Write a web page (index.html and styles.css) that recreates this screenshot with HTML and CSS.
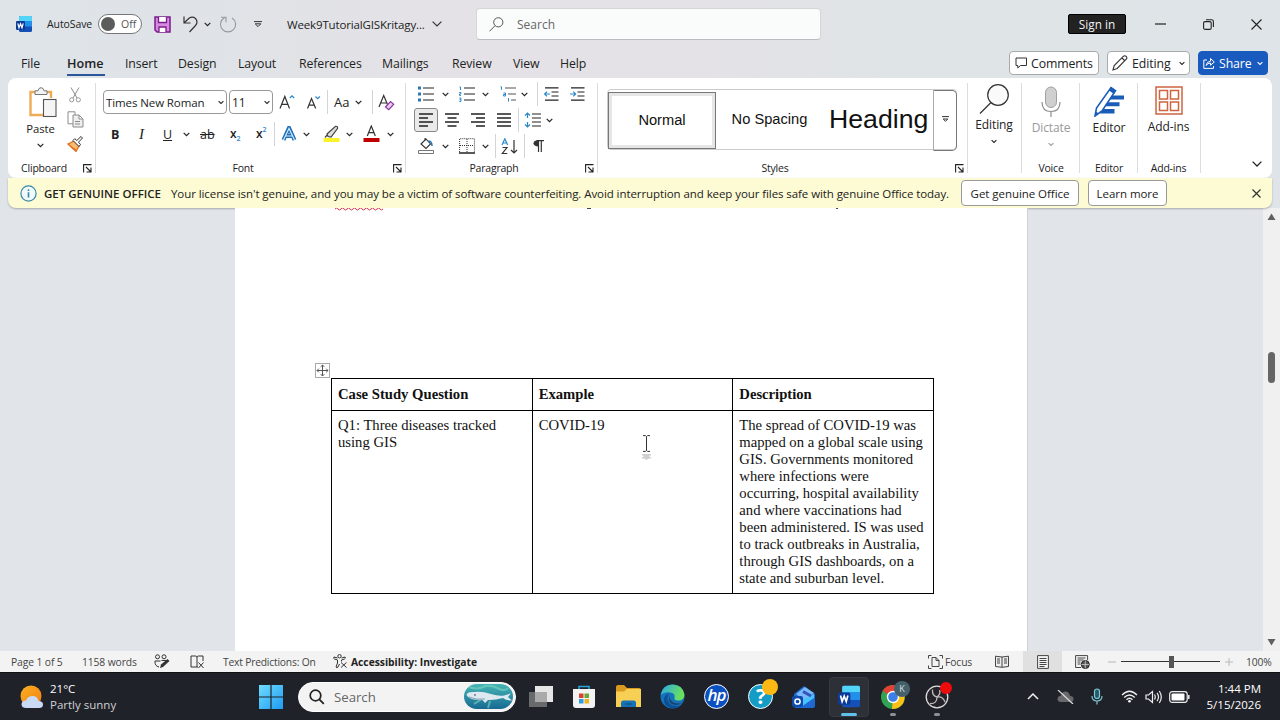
FILE: index.html
```
<!DOCTYPE html>
<html lang="en">

<head>
  <meta charset="UTF-8">
  <title>Week9TutorialGISKritagy - Word</title>
  <link rel="stylesheet" href="styles.css">
</head>

<body>
  <svg width="0" height="0" class="defs">
    <defs>
      <linearGradient id="blueGrad" x1="0" y1="0" x2="1" y2="1">
        <stop offset="0" stop-color="#6fdcff" />
        <stop offset="1" stop-color="#1f9bf0" />
      </linearGradient>
      <linearGradient id="sunGrad" x1="0" y1="0" x2="1" y2="1">
        <stop offset="0" stop-color="#fdb022" />
        <stop offset="1" stop-color="#f07f12" />
      </linearGradient>
      <linearGradient id="edgeGrad" x1="0" y1="0" x2="1" y2="0.3">
        <stop offset="0" stop-color="#2aa8e8" />
        <stop offset="1" stop-color="#6be05a" />
      </linearGradient>
      <linearGradient id="seaGrad" x1="0" y1="0" x2="0" y2="1">
        <stop offset="0" stop-color="#46b6b4" />
        <stop offset="1" stop-color="#176a92" />
      </linearGradient>
    </defs>
    <symbol id="chev" viewBox="0 0 7 5"><path d="M.7 .8 3.500 3.600 6.300 .8" fill="none" stroke="currentColor" stroke-width="1.200" /></symbol>
    <symbol id="launch" viewBox="0 0 9 9"><path d="M.6 8.500V.6H8.500M3 3l4.500 4.500M8 3.500V8H3.500" fill="none" stroke="#222" stroke-width="1.100" /></symbol>
    <symbol id="word" viewBox="0 0 16 16">
      <rect x="3" y="0" width="13" height="16" rx="1.500" fill="#1550b8" />
      <path d="M3 5V1.500Q3 0 4.500 0h10Q16 0 16 1.500V5z" fill="#52d5f8" />
      <path d="M3 5h13v5.500H3z" fill="#2290ea" />
      <rect x="0" y="5" width="9" height="9" rx="1.200" fill="#0b3a96" />
      <path d="M1.800 7.300 3 11.700 4.500 7.700 6 11.700 7.200 7.300" fill="none" stroke="#fff" stroke-width="1.200" />
    </symbol>
  </svg>

  <header class="titlebar">
    <svg width="16" height="16"><use href="#word" /></svg>
    <span class="autosave">AutoSave</span>
    <span class="toggle"><i></i>Off</span>
    <svg width="17" height="17" viewBox="0 0 17 17"><path d="M1 1h15v15H3l-2-2z" fill="#d68be0" stroke="#7a1c8c" stroke-width="1.500" /><path d="M4.500 1v5.500h8V1M5 16v-5h7v5" fill="#fff" stroke="#7a1c8c" stroke-width="1.300" /></svg>
    <svg width="16" height="17" viewBox="0 0 16 17"><path d="M1 .5V7h6.500M1.200 6.800 6 2.300Q9.500 0 12.500 2.500 15.500 6 12.500 9.500L6.500 16" fill="none" stroke="#333" stroke-width="1.200" /></svg>
    <svg width="7" height="5"><use href="#chev" /></svg>
    <svg width="17" height="17" viewBox="0 0 17 17"><path d="M4.500 1.800A7.500 7.500 0 1 0 12 2M1 1.200h5v5M" fill="none" stroke="#969a9e" stroke-width="1.100" /></svg>
    <svg width="8" height="7" viewBox="0 0 8 7"><path d="M0 .6h8M1.200 2.800 4 5.600 6.800 2.800z" fill="none" stroke="#333" /></svg>
    <span class="filename">Week9TutorialGISKritagy...</span>
    <svg width="10" height="6" viewBox="0 0 10 6"><path d="m.6.6 4.400 4.400L9.400.6" fill="none" stroke="#333" stroke-width="1.200" /></svg>
    <div class="search">
      <svg width="15" height="15" viewBox="0 0 15 15"><circle cx="9.300" cy="5.300" r="4.600" fill="none" stroke="#555" /><path d="M6 8.700.5 14.300" stroke="#555" /></svg>
      <span>Search</span>
    </div>
    <span class="signin">Sign in</span>
    <svg width="11" height="2"><path d="M0 1h11" stroke="#222" stroke-width="1.200" /></svg>
    <svg width="11" height="11" viewBox="0 0 11 11"><rect x=".6" y="2.600" width="7.600" height="7.800" rx="1.500" fill="none" stroke="#222" stroke-width="1.100" /><path d="M3 .7h5.500q1.900 0 1.900 1.900V8" fill="none" stroke="#222" stroke-width="1.100" /></svg>
    <svg width="11" height="11" viewBox="0 0 11 11"><path d="m.5.5 10 10M10.500.5l-10 10" stroke="#222" stroke-width="1.100" /></svg>
  </header>

  <nav class="tabs">
    <span>File</span>
    <span class="active">Home</span>
    <span>Insert</span>
    <span>Design</span>
    <span>Layout</span>
    <span>References</span>
    <span>Mailings</span>
    <span>Review</span>
    <span>View</span>
    <span>Help</span>
    <div class="pill">
      <svg width="12" height="12" viewBox="0 0 12 12"><path d="M1 1h10.500v7.500h-6L2.800 11V8.500H1z" fill="none" stroke="#333" /></svg>
      <b>Comments</b>
    </div>
    <div class="pill">
      <svg width="16" height="16" viewBox="0 0 16 16"><path d="m1 15 1.200-4.500L11.500 1.200q1.500-1 2.700.2t.3 2.600L5.200 13.500zM10 3l3 3" fill="none" stroke="#333" stroke-width="1.100" /></svg>
      <b>Editing</b>
      <svg width="6" height="5"><use href="#chev" /></svg>
    </div>
    <div class="pill share">
      <svg width="12" height="12" viewBox="0 0 12 12"><path d="M4 3H.8v8.400h9.700V9M3.200 8.500Q3.500 4.500 7.500 4.200V1.500L11.300 5 7.500 8.200V6Q4.500 6 3.200 8.500z" fill="none" stroke="#fff" /></svg>
      <b>Share</b>
      <svg width="6" height="5"><use href="#chev" /></svg>
    </div>
  </nav>

  <section class="ribbon">
    <div class="group clipboard">
      <div class="body">
        <div class="big">
          <svg width="28" height="31" viewBox="0 0 28 31"><path d="M6 5H1.500v23H14" fill="none" stroke="#eeaa55" stroke-width="2.400" /><path d="M18 5h4v6" fill="none" stroke="#eeaa55" stroke-width="2.400" /><path d="M6 7.500V3.800h3Q9.500.7 12 .7t3 3.100h3v3.700z" fill="#f2f2f2" stroke="#777" /><rect x="14.500" y="12.500" width="12.500" height="17" fill="#f5f5f5" stroke="#555" stroke-width="1.100" /></svg>
          <span>Paste</span>
          <svg width="7" height="5"><use href="#chev" /></svg>
        </div>
        <div class="minis">
          <svg width="12" height="16" viewBox="0 0 12 16"><path d="M2 .5 8 11M10 .5 4 11" stroke="#8c8c8c" /><circle cx="2.700" cy="12.800" r="2.100" fill="none" stroke="#999" /><circle cx="9.300" cy="12.800" r="2.100" fill="none" stroke="#999" /></svg>
          <svg width="17" height="17" viewBox="0 0 17 17"><path d="M1 .8h7v12H1z" fill="#fff" stroke="#8c8c8c" /><path d="M6 4h6l4 4v8H6zM12 4v4h4M8 10.500h5M8 13h5" fill="#eee" stroke="#8c8c8c" /></svg>
          <svg width="16" height="16" viewBox="0 0 16 16"><path d="m1 8 6-3 5 5-3 5.500z" fill="#f7ba70" stroke="#dc6d19" stroke-width="1.200" /><path d="m6 4.500 6 6 1.500-2-2-2.300L15.500 2 14 .5 9.800 4.500 7.800 2.700z" fill="#fff" stroke="#333" /><path d="m3 10 6 4" stroke="#dc6d19" /></svg>
        </div>
      </div>
      <div class="label"><span>Clipboard</span><svg width="9" height="9"><use href="#launch" /></svg></div>
    </div>

    <div class="group font">
      <div class="body">
        <div class="row font-row1">
          <div class="combo name"><span>Times New Roman</span><svg width="6" height="5"><use href="#chev" /></svg></div>
          <div class="combo size"><span>11</span><svg width="6" height="5"><use href="#chev" /></svg></div>
          <svg width="16" height="17" viewBox="0 0 16 17"><path d="M1 14.500 5.800 2.500l4.700 12M2.700 10.300h6.200" fill="none" stroke="#333" stroke-width="1.200" /><path d="m10.800 4 2.200-2.200L15.200 4" fill="none" stroke="#2b88c8" stroke-width="1.200" /></svg>
          <svg width="15" height="17" viewBox="0 0 15 17"><path d="M1.500 14.500 5.500 4.500l4.200 10M2.900 11.200h5.300" fill="none" stroke="#333" stroke-width="1.200" /><path d="m9.500 2.500 2.200 2.200 2.200-2.200" fill="none" stroke="#2b88c8" stroke-width="1.200" /></svg>
          <i class="sep"></i>
          <span class="aa">Aa</span>
          <svg width="7" height="5"><use href="#chev" /></svg>
          <i class="sep"></i>
          <svg width="17" height="17" viewBox="0 0 17 17"><path d="M1 13 5.700 1.500l4 9.500M2.800 9h6" fill="none" stroke="#333" stroke-width="1.200" /><path d="m7.500 13 5-5.500 3.200 2.700-5 5.500z" fill="#eccdf2" stroke="#8e35a1" stroke-width="1.200" /></svg>
        </div>
        <div class="row font-row2">
          <b class="g-b">B</b>
          <em class="g-i">I</em>
          <u class="g-u">U</u>
          <svg width="7" height="5"><use href="#chev" /></svg>
          <s class="g-s">ab</s>
          <span class="g-x">x<sub>2</sub></span>
          <span class="g-x">x<sup>2</sup></span>
          <i class="sep"></i>
          <svg width="16" height="16" viewBox="0 0 16 16"><path d="M2.500 14 8 1.800 13.500 14M4.500 10h7" fill="none" stroke="#1e6fb8" stroke-width="4" /><path d="M2.500 14 8 2.500 13.500 14M4.500 10h7" fill="none" stroke="#cfe8fa" stroke-width="1.200" /></svg>
          <svg width="7" height="5"><use href="#chev" /></svg>
          <svg width="17" height="18" viewBox="0 0 17 18"><path d="m4 9 1 2.500 3 .5 6.500-8.500Q15 1 12.500 1.300zM4.500 9.500 2 12.500" fill="#ddd" stroke="#444" stroke-width="1.200" /><path d="M.5 13h16v4H.5z" fill="#fbf32a" /></svg>
          <svg width="7" height="5"><use href="#chev" /></svg>
          <svg width="17" height="18" viewBox="0 0 17 18"><path d="M4.300 11 8.300 1l4 10M5.700 7.600h5.300" fill="none" stroke="#333" stroke-width="1.200" /><path d="M.5 13h16v4H.5z" fill="#c00000" /></svg>
          <svg width="7" height="5"><use href="#chev" /></svg>
        </div>
      </div>
      <div class="label"><span>Font</span><svg width="9" height="9"><use href="#launch" /></svg></div>
    </div>

    <div class="group paragraph">
      <div class="body">
        <div class="row para-row1">
          <svg width="16" height="16" viewBox="0 0 16 16"><path d="M0 .5h3v3H0zM0 6.500h3v3H0zM0 12.500h3v3H0z" fill="#2878b8" /><path d="M5 2h11M5 8h11M5 14h11" stroke="#222" stroke-width="1.200" /></svg>
          <svg width="7" height="5"><use href="#chev" /></svg>
          <svg width="16" height="16" viewBox="0 0 16 16"><path d="M.5 1h1v3M.3 6.500h1.600v1.400H.5v1.500H2M.3 12h1.600v3.500H.3M.5 13.700h1.400" fill="none" stroke="#2b88c8" /><path d="M5 2h11M5 8h11M5 14h11" stroke="#222" stroke-width="1.200" /></svg>
          <svg width="7" height="5"><use href="#chev" /></svg>
          <svg width="16" height="16" viewBox="0 0 16 16"><path d="M.5.800h1v3M3.500 7h2v3h-2V8.500h2M8.500 12v3.500" fill="none" stroke="#2b88c8" /><path d="M5 2h11M8 8h8M11 14h5" stroke="#555" stroke-width="1.200" /></svg>
          <svg width="7" height="5"><use href="#chev" /></svg>
          <i class="sep"></i>
          <svg width="15" height="14" viewBox="0 0 15 14"><path d="M1 .8h13.500M7.500 5h7M7.500 9h7M1 13.200h13.500" stroke="#222" stroke-width="1.200" /><path d="M6 7H.8M3 4.700.7 7 3 9.300" fill="none" stroke="#2b88c8" stroke-width="1.200" /></svg>
          <svg width="15" height="14" viewBox="0 0 15 14"><path d="M1 .8h13.500M7.500 5h7M7.500 9h7M1 13.200h13.500" stroke="#222" stroke-width="1.200" /><path d="M0 7h5.500M3.300 4.700 5.600 7 3.300 9.300" fill="none" stroke="#2b88c8" stroke-width="1.200" /></svg>
        </div>
        <div class="row para-row2">
          <span class="pressed"><svg width="14" height="14" viewBox="0 0 14 14"><path d="M0 1h14M0 5h9M0 9h14M0 13h9" stroke="#222" stroke-width="1.300" /></svg></span>
          <svg width="14" height="14" viewBox="0 0 14 14"><path d="M0 1h14M2.500 5h9M0 9h14M2.500 13h9" stroke="#222" stroke-width="1.300" /></svg>
          <svg width="14" height="14" viewBox="0 0 14 14"><path d="M0 1h14M5 5h9M0 9h14M5 13h9" stroke="#222" stroke-width="1.300" /></svg>
          <svg width="14" height="14" viewBox="0 0 14 14"><path d="M0 1h14M0 5h14M0 9h14M0 13h14" stroke="#222" stroke-width="1.300" /></svg>
          <i class="sep"></i>
          <svg width="17" height="16" viewBox="0 0 17 16"><path d="M3.500 1v5M1 3.500 3.500 1 6 3.500M3.500 15v-5M1 12.500 3.500 15 6 12.500" fill="none" stroke="#2b88c8" stroke-width="1.200" /><path d="M8 2h9M8 6h9M8 10h9M8 14h9" stroke="#222" stroke-width="1.200" /></svg>
          <svg width="7" height="5"><use href="#chev" /></svg>
        </div>
        <div class="row para-row3">
          <svg width="17" height="16" viewBox="0 0 17 16"><path d="m3 6 5-5 4.500 5L8 10.500zM7 3V0" fill="none" stroke="#333" stroke-width="1.100" /><path d="M10 3.500q4-1 4 4.500" fill="none" stroke="#1e6fb8" stroke-width="1.500" /><path d="M.5 12.500h15v3H.5z" fill="#fff" stroke="#777" /></svg>
          <svg width="7" height="5"><use href="#chev" /></svg>
          <svg width="16" height="16" viewBox="0 0 16 16"><path d="M.6 14V.7h14.800V14M8 1v13M1 7.500h14" fill="none" stroke="#333" stroke-dasharray="1 1" /><path d="M0 15h16" stroke="#111" stroke-width="1.400" /></svg>
          <svg width="7" height="5"><use href="#chev" /></svg>
          <i class="sep"></i>
          <svg width="17" height="17" viewBox="0 0 17 17"><path d="M1 7 3.800.8 6.700 7M2 5h3.600" fill="none" stroke="#2b88c8" stroke-width="1.200" /><path d="M1.500 9.500H6L1.300 15.500h5M13 2v13M10 12l3 3 3-3" fill="none" stroke="#333" stroke-width="1.200" /></svg>
          <i class="sep"></i>
          <svg width="11" height="12" viewBox="0 0 11 12"><path d="M5.500.7V12M8.300.7V12M3.500.7H11" stroke="#333" stroke-width="1.200" /><path d="M5.500.2Q.5.200.5 3.300T5.500 6.500z" fill="#333" /></svg>
        </div>
      </div>
      <div class="label"><span>Paragraph</span><svg width="9" height="9"><use href="#launch" /></svg></div>
    </div>

    <div class="group styles">
      <div class="body">
        <div class="gallery">
          <div class="style selected">Normal</div>
          <div class="style">No Spacing</div>
          <div class="style heading">Heading</div>
          <div class="more"><svg width="7" height="7" viewBox="0 0 7 7"><path d="M0 .6h7M1.200 3 3.500 5.300 5.800 3z" fill="none" stroke="#333" /></svg></div>
        </div>
      </div>
      <div class="label"><span>Styles</span><svg width="9" height="9"><use href="#launch" /></svg></div>
    </div>

    <div class="group editing">
      <div class="big">
        <svg width="30" height="30" viewBox="0 0 30 30"><circle cx="19" cy="11" r="10.300" fill="#fafafa" stroke="#333" stroke-width="1.200" /><path d="M12 18.500 1 29.500" stroke="#333" stroke-width="1.200" /></svg>
        <span>Editing</span>
        <svg width="6" height="5"><use href="#chev" /></svg>
      </div>
    </div>

    <div class="group voice">
      <div class="big">
        <svg width="20" height="31" viewBox="0 0 20 31"><rect x="4.500" y="1" width="11" height="20.500" rx="5.500" fill="#cfcfcf" stroke="#a0a0a0" /><path d="M1 16q0 9.500 9 9.500t9-9.500M10 25.500V31" fill="none" stroke="#8e8e8e" stroke-width="1.200" /></svg>
        <span>Dictate</span>
        <svg width="6" height="5"><use href="#chev" /></svg>
      </div>
      <div class="label"><span>Voice</span></div>
    </div>

    <div class="group editor">
      <div class="big">
        <svg width="31" height="31" viewBox="0 0 31 31"><path d="M14 9.500h16v4H12zM11 16.300h14.500v4H9zM9 23h11.500v4.500H6z" fill="#1b5cb8" /><path d="m1 30 1.500-8L17 1.500l4.500 3.200L8 25z" fill="#fff" stroke="#1b5cb8" stroke-width="1.600" /><path d="m17 1 5 3.500L20 8l-5-3.500zM1 30l.8-4.500 3 2z" fill="#1b5cb8" /></svg>
        <span>Editor</span>
      </div>
      <div class="label"><span>Editor</span></div>
    </div>

    <div class="group addins">
      <div class="big">
        <svg width="28" height="29" viewBox="0 0 28 29"><path d="M1 1h26v27H1zM4.500 4.500h8v8.500h-8zM15.500 4.500h8v8.500h-8zM4.500 16h8v8.500h-8zM15.500 16h8v8.500h-8z" fill="#fff" stroke="#ce6540" stroke-width="1.500" /></svg>
        <span>Add-ins</span>
      </div>
      <div class="label"><span>Add-ins</span></div>
    </div>

    <div class="collapse"><svg width="10" height="6" viewBox="0 0 10 6"><path d="m.6.6 4.400 4.400L9.400.6" fill="none" stroke="#222" stroke-width="1.300" /></svg></div>
  </section>

  <section class="notice">
    <svg width="17" height="17" viewBox="0 0 17 17"><circle cx="8.500" cy="8.500" r="7.600" fill="#f0fafa" stroke="#3a87a8" stroke-width="1.200" /><path d="M8.500 7.200v5.300M8.500 4.300v1.800" stroke="#3a87a8" stroke-width="1.600" /></svg>
    <b class="n-title">GET GENUINE OFFICE</b>
    <span class="n-text">Your license isn't genuine, and you may be a victim of software counterfeiting. Avoid interruption and keep your files safe with genuine Office today.</span>
    <span class="n-btn">Get genuine Office</span>
    <span class="n-btn n-learn">Learn more</span>
    <svg width="9" height="9" viewBox="0 0 9 9"><path d="m.5.5 8 8M8.500.5l-8 8" stroke="#333" stroke-width="1.200" /></svg>
  </section>

  <main class="workspace">
    <article class="page">
      <svg class="remnant" width="520" height="3" viewBox="0 0 520 3"><path d="M0 1q1.500-2 3 0t3 0 3 0 3 0 3 0 3 0 3 0 3 0 3 0 3 0 3 0 3 0 3 0 3 0 3 0 3 0" fill="none" stroke="#d03048" /><path d="M252 .5h4M501 .5h2" stroke="#444" /></svg>
      <div class="handle"><svg width="13" height="13" viewBox="0 0 13 13"><path d="M6.500 1v11M1 6.500h11M4.700 2.800 6.500 1l1.800 1.800M4.700 10.200 6.500 12l1.800-1.800M2.800 4.700 1 6.500l1.800 1.800M10.200 4.700 12 6.500l-1.800 1.800" fill="none" stroke="#555" /></svg></div>
      <table>
        <tr>
          <th>Case Study Question</th>
          <th>Example</th>
          <th>Description</th>
        </tr>
        <tr>
          <td>Q1: Three diseases tracked<br>using GIS</td>
          <td>COVID-19</td>
          <td>The spread of COVID-19 was<br>mapped on a global scale using<br>GIS. Governments monitored<br>where infections were<br>occurring, hospital availability<br>and where vaccinations had<br>been administered. IS was used<br>to track outbreaks in Australia,<br>through GIS dashboards, on a<br>state and suburban level.</td>
        </tr>
      </table>
      <svg class="cursor" width="9" height="26" viewBox="0 0 9 26"><path d="M1 .6h2.500l1 1 1-1H8M4.500 1.500v14M1 16.400h2.500l1-1 1 1H8" fill="none" stroke="#333" /><path d="M0 19h9v1.500H7.500V22H9v1.500H7L4.500 25 2 23.500H0V22h1.500v-1.500H0z" fill="#d0d0d0" /></svg>
    </article>
    <aside class="scrollbar">
      <svg width="9" height="8" viewBox="0 0 9 8"><path d="M4.500.5 8.500 7h-8z" fill="#606060" /></svg>
      <i class="thumb"></i>
      <svg width="9" height="8" viewBox="0 0 9 8"><path d="M4.500 7.500 8.500 1h-8z" fill="#606060" /></svg>
    </aside>
  </main>

  <footer class="status">
    <span>Page 1 of 5</span>
    <span>1158 words</span>
    <svg width="16" height="15" viewBox="0 0 16 15"><circle cx="3.500" cy="2.800" r="2" fill="none" stroke="#333" /><circle cx="10" cy="2.800" r="2" fill="none" stroke="#333" /><path d="M6.500 7H1q-.5 5 4 6M7.500 6.500h6" fill="none" stroke="#333" /><path d="m6 14 1-3.500L13.500 5l2 2L9 13z" fill="#333" /></svg>
    <svg width="15" height="14" viewBox="0 0 15 14"><path d="M8 12H1V1h4.500Q7 1 7 2.500V12M7 2.500Q7 1 8.500 1H13v5M8.500 7.500l5 5.500M13.500 7.500l-5 5.500" fill="none" stroke="#333" /></svg>
    <span class="s-pred">Text Predictions: On</span>
    <svg width="15" height="15" viewBox="0 0 15 15"><circle cx="6.500" cy="2.200" r="1.700" fill="none" stroke="#333" /><path d="M4.500 4 1 3q-1 1.300.5 2L4.500 6v3L3 13q1 1.500 2 0l1.500-3M8.500 4 12 3q1 1.300-.5 2L8.500 6v1.500M8 8.500l5.500 5M13.500 8.500l-5.500 5" fill="none" stroke="#333" /></svg>
    <b class="s-acc">Accessibility: Investigate</b>
    <svg width="15" height="14" viewBox="0 0 15 14"><path d="M.5 3.500v-3h3M11.500.5h3v3M.5 10.500v3h3M11.500 13.500h3v-3M4 2.500h4l3 3v6H4zM8 2.500v3h3" fill="none" stroke="#444" /></svg>
    <span>Focus</span>
    <svg width="14" height="13" viewBox="0 0 14 13"><path d="M.5 1.200 7 2l6.500-.8v10.300L7 12.300.5 11.500zM7 2v10M2 4h3M2 6h3M2 8h3M9 4h3M9 6h3M9 8h3" fill="#eee" stroke="#444" /></svg>
    <i class="view-on"><svg width="12" height="14" viewBox="0 0 12 14"><path d="M.6.6h10.800v12.800H.6zM2.500 3.500h7M2.500 5.500h7M2.500 7.500h7M2.500 9.500h7M2.500 11.500h5" fill="#f4f4f4" stroke="#444" /></svg></i>
    <svg width="15" height="14" viewBox="0 0 15 14"><path d="M6 12.500H.6V.6h12V5M2.500 3h8M2.500 5h6M2.500 7h3M2.500 9h3" fill="none" stroke="#444" /><circle cx="10.300" cy="9.500" r="4" fill="#555" stroke="#222" /><path d="M6.500 9.500h7.500M10.300 5.500v8" stroke="#ddd" stroke-width=".7" /></svg>
    <svg width="8" height="2"><path d="M0 1h8" stroke="#b8b8b8" /></svg>
    <i class="slider"></i>
    <svg width="8" height="8"><path d="M0 4h8M4 0v8" stroke="#b8b8b8" /></svg>
    <span>100%</span>
  </footer>

  <footer class="taskbar">
    <svg width="24" height="24" viewBox="0 0 24 24"><circle cx="11" cy="11" r="10.500" fill="url(#sunGrad)" /><path d="M6 23Q1.500 23 1.500 19.300T6 15.500Q7.500 11 12.500 11T18.500 16q4.500 0 4.500 3.500T19 23z" fill="#c9daf6" /></svg>
    <div class="weather"><span>21°C</span><span class="w-text">Partly sunny</span></div>
    <svg width="24" height="24" viewBox="0 0 24 24"><path d="M0 0h11.400v11.400H0zM12.600 0H24v11.400H12.600zM0 12.600h11.400V24H0zM12.600 12.600H24V24H12.600z" fill="url(#blueGrad)" /></svg>
    <div class="task-search">
      <svg width="16" height="16" viewBox="0 0 16 16"><circle cx="6.500" cy="6.500" r="5.300" fill="none" stroke="#222" stroke-width="1.700" /><path d="m10.300 10.300 4.500 4.500" stroke="#222" stroke-width="1.800" /></svg>
      <span>Search</span>
      <svg width="49" height="25" viewBox="0 0 49 25"><rect width="49" height="25" rx="12.500" fill="url(#seaGrad)" /><path d="M5 3q8 3 14 0t14 1 11 0M10 20l8-5M24 24l2-7" stroke="#7fd6c4" stroke-width="2" fill="none" opacity=".6" /><path d="M2.500 11Q3 7.500 10 8q8-1 17 2 8 2.500 13 1.500L47 9.500 44 13l4 3.500q-6 0-9-2.500-9 2.500-15 2l-3 3-3-3.500Q6 17 2.500 11z" fill="#dde8f0" /><path d="M5 13q7 3 16 2" stroke="#8aa4bc" fill="none" /><circle cx="11" cy="11" r=".8" fill="#234" /></svg>
    </div>
    <svg width="25" height="23" viewBox="0 0 25 23"><path d="M6 1h18v16H6z" fill="#e6e6e6" /><path d="M0 7h18v15H0z" fill="#777" opacity=".85" /><path d="M6 7h12v10H6z" fill="#aaa" /></svg>
    <svg width="24" height="24" viewBox="0 0 24 24"><path d="M7 4V1.500h10V4" fill="none" stroke="#29a8d8" stroke-width="1.500" /><path d="M1 4h22v16q0 3-3 3H4q-3 0-3-3z" fill="#f3f3f3" /><path d="M7 8.500h4.500V13H7z" fill="#d8432f" /><path d="M12.500 8.500H17V13h-4.500z" fill="#6aa832" /><path d="M7 14h4.500v4.500H7z" fill="#2b9fe0" /><path d="M12.500 14H17v4.500h-4.500z" fill="#f0b322" /></svg>
    <svg width="25" height="23" viewBox="0 0 25 23"><path d="M0 2q0-2 2-2h6l3 3h12q2 0 2 2v5H0z" fill="#d99a1e" /><path d="M0 6.500h8L10.500 4H25v18H0z" fill="#f8cf55" /><path d="M5 22v-4q0-2.500 2.500-2.500h10q2.500 0 2.500 2.500v4z" fill="#1672b5" /><path d="M9 19h7" stroke="#0c4a80" /></svg>
    <svg width="25" height="25" viewBox="0 0 25 25"><circle cx="12.500" cy="12.500" r="12" fill="#1572bd" /><path d="M.7 11Q2.500.5 12.500.5t12 10q0 6-6.500 6-4 0-3.500-2.500 1-5-4.500-5.500Q4 7.500.7 11z" fill="url(#edgeGrad)" /><path d="M9 9q-3.500 6 .5 10.500 4 4 10.500 1.800-3 3-7.500 3.200Q3.500 23 4 15q.5-4 5-6z" fill="#0d4f94" /><path d="M11 9.500q-2.500 3-.5 6.500 3 4 9 3.500 2-.5 3.500-1.500-3 3-7 3-6-.5-7-5-.3-4 2-6.500z" fill="#1f2229" opacity=".6" /></svg>
    <div class="hp">hp</div>
    <div class="help">?</div>
    <svg width="24" height="24" viewBox="0 0 24 24"><path d="M2 9 12 1l11 8v12q0 2-2 2H5q-3 0-3-2z" fill="#1d68d2" /><path d="M4 9 13 2l9 6-9 8z" fill="#79b8fa" /><path d="m4 18 18-9v4L9 22z" fill="#48c3fb" /><path d="M11 6.500 19 11" stroke="#3056b8" stroke-width="3" /><rect y="11" width="11" height="11" rx="2" fill="#0f4bab" /><circle cx="5.500" cy="16.500" r="2.600" fill="none" stroke="#fff" stroke-width="1.500" /></svg>
    <div class="running"><svg width="22" height="23" viewBox="0 0 16 16"><use href="#word" /></svg></div>
    <div class="app chrome"><svg width="24" height="24" viewBox="0 0 24 24"><circle cx="12" cy="12" r="12" fill="#32a350" /><path d="M12 12 1.600 6Q5 0 12 0t10.400 6z" fill="#e34133" /><path d="M12 12 22.400 6Q25 12 22 18.500 18 24 11 24z" fill="#fbc116" /><circle cx="12" cy="12" r="5.500" fill="#3d7fe8" stroke="#fff" stroke-width="1.400" /></svg></div>
    <div class="app obs"><svg width="24" height="24" viewBox="0 0 24 24"><circle cx="12" cy="12" r="10.800" fill="#252329" stroke="#ddd" stroke-width="1.300" /><path d="M7.500 4.500Q7 11 12 12q6-1 8 5M12 12q0 7-7 6.500M12 12q4-3 2.500-7" fill="none" stroke="#bbb" stroke-width="1.300" /></svg></div>
    <svg width="12" height="7" viewBox="0 0 12 7"><path d="m1 6 5-5 5 5" fill="none" stroke="#eee" stroke-width="1.500" /></svg>
    <svg width="17" height="14" viewBox="0 0 17 14"><path d="M4 12q-3.500 0-3.500-3T4 5.500Q5 1.500 8.500 1.500T13 6q3.500 0 3.500 3T13.500 12z" fill="#69696d" /><path d="m1 0 15 14" stroke="#ddd" stroke-width="1.200" /></svg>
    <svg width="12" height="17" viewBox="0 0 12 17"><rect x="3.500" y="1" width="5" height="9.500" rx="2.500" fill="#245b66" stroke="#7ec8d6" stroke-width="1.200" /><path d="M1 8q0 5 5 5t5-5M6 13v3.500" fill="none" stroke="#7ec8d6" stroke-width="1.200" /></svg>
    <svg width="17" height="13" viewBox="0 0 17 13"><path d="M1 5q7.500-7.500 15 0M3.200 7.500q5.300-5 10.600 0M5.500 9.800q3-3 6 0" fill="none" stroke="#eee" stroke-width="1.300" /><circle cx="8.500" cy="11.300" r="1.300" fill="#fff" /></svg>
    <svg width="17" height="14" viewBox="0 0 17 14"><path d="M1 5h2.500L7.500 1.500v11L3.500 9H1z" fill="none" stroke="#eee" stroke-width="1.200" /><path d="M9.500 4.500q1.500 2.500 0 5M12 2.800q3 4.200 0 8.400M14.300 1q4 6 0 12" fill="none" stroke="#eee" stroke-width="1.200" /></svg>
    <svg width="21" height="12" viewBox="0 0 21 12"><rect x=".7" y=".7" width="17.500" height="10.600" rx="2.500" fill="none" stroke="#eee" stroke-width="1.200" /><rect x="2.500" y="2.500" width="13" height="7" rx="1" fill="#fff" /><path d="M19.800 4v4" stroke="#eee" stroke-width="1.500" /></svg>
    <div class="clock"><span>1:44 PM</span><span>5/15/2026</span></div>
  </footer>
</body>

</html>
```
FILE: styles.css
```
* {
  box-sizing: border-box;
}

body {
  margin: 0;
  width: 1280px;
  height: 720px;
  overflow: hidden;
  display: flex;
  flex-direction: column;
  background: linear-gradient(90deg, #dfe4e8 0, #dfe3e7 200px, #e4e2e6 420px, #e4e2e6 700px, #dfe4e7 900px, #dfe4e8 1280px);
  font-family: "Open Sans", "Noto Sans", sans-serif;
  font-size: 12px;
  color: #222;
}

svg {
  display: block;
  flex: none;
}

b {
  font-weight: normal;
}

span,
b {
  white-space: nowrap;
}

.defs {
  position: absolute;
}

/* columns are the distances between left edges */
.titlebar {
  height: 48px;
  display: grid;
  grid-template-columns: 31px 51px 56px 29px 21px 16px 34px 33px 145px 44px 592px 87px 48px 48px 20px;
  align-items: center;
  padding-left: 16px;
}

.autosave {
  font-size: 10.500px;
  letter-spacing: -0.1px;
}

.toggle {
  width: 44px;
  height: 20px;
  border: 1px solid #777;
  border-radius: 10px;
  background: #fff;
  display: flex;
  align-items: center;
  gap: 6px;
  padding-left: 2px;
  font-size: 10.500px;
  color: #555;
}

.toggle i {
  width: 14px;
  height: 14px;
  border-radius: 50%;
  background: #5c5c5c;
}

.filename {
  font-size: 11.500px;
  letter-spacing: -0.15px;
}

.search {
  width: 345px;
  height: 32px;
  background: #fafbfb;
  border: 1px solid #d4d6da;
  border-bottom-color: #b9bcc0;
  border-radius: 4px;
  display: flex;
  align-items: center;
  gap: 13px;
  padding-left: 12px;
  color: #666;
  font-size: 12px;
}

.signin {
  width: 58px;
  height: 20px;
  background: #222;
  border: 1px solid #000;
  border-radius: 2px;
  color: #f2f2f2;
  text-align: center;
  line-height: 19px;
  font-size: 11.800px;
}

.tabs {
  height: 30px;
  padding-left: 21px;
  display: grid;
  grid-template-columns: 46px 58px 53px 60px 61px 83px 70px 61px 47px 449px 98px 91px 70px;
  align-items: center;
  font-size: 12.300px;
  letter-spacing: -0.1px;
}

.tabs > span {
  height: 26px;
  line-height: 28px;
}

.tabs .active {
  width: 38px;
  font-weight: 600;
  font-size: 12.600px;
  letter-spacing: 0;
  border-bottom: 2px solid #2b579a;
}

.pill {
  height: 24px;
  display: flex;
  align-items: center;
  background: #fff;
  border: 1px solid #aaa;
  border-radius: 4px;
  padding-left: 5px;
  gap: 4px;
  width: 90px;
}

.pill + .pill {
  width: 83px;
  padding-left: 4px;
}

.pill b + svg {
  margin-left: auto;
  margin-right: 4px;
}

.tabs .pill.share {
  width: 70px;
  background: #185abd;
  border-color: #185abd;
  color: #fff;
  padding-left: 4px;
}

.ribbon {
  height: 100px;
  margin: 0 8px;
  background: #fff;
  border-radius: 8px;
  display: flex;
}

.group {
  height: 100px;
  display: flex;
  flex-direction: column;
  position: relative;
}

.group::after {
  content: "";
  position: absolute;
  right: 0;
  top: 5px;
  height: 90px;
  width: 1px;
  background: #dcdcdc;
}

.group .body {
  height: 80px;
}

.label {
  height: 20px;
  margin-top: auto;
  display: flex;
  align-items: center;
  font-size: 10.500px;
  letter-spacing: -0.2px;
}

.label span {
  flex: 1;
  text-align: center;
  margin-top: -1px;
}

.label svg {
  margin: 0 4px 0 3px;
}

.clipboard {
  width: 88px;
}

.clipboard .body {
  display: flex;
}

.big {
  display: flex;
  flex-direction: column;
  align-items: center;
}

.clipboard .big {
  width: 65px;
  padding-top: 9px;
}

.clipboard .big > :first-child {
  margin-left: 5px;
}

.big span {
  line-height: 16px;
  margin: 3px 0 6px;
  letter-spacing: -0.1px;
}

.clipboard .big span {
  font-size: 11.300px;
}

.minis {
  display: flex;
  flex-direction: column;
  align-items: center;
  gap: 8px;
  padding-top: 9px;
  margin-left: -8px;
  width: 20px;
}

.font {
  width: 310px;
}

.font .body {
  padding: 12px 0 0 7px;
}

.row {
  display: grid;
  align-items: center;
}

.font-row1 {
  height: 24px;
  grid-template-columns: 126px 50px 27px 21px 7px 21px 17px 6px 20px;
}

.font-row2 {
  height: 24px;
  margin-top: 8px;
  padding-left: 8px;
  grid-template-columns: 28px 24px 20px 17px 30px 26px 18px 7px 22px 20px 23px 17px 24px 10px;
}

.combo {
  height: 24px;
  border: 1px solid #999;
  border-radius: 4px;
  display: flex;
  align-items: center;
  justify-content: space-between;
  padding: 0 2px;
}

.combo.name {
  width: 124px;
  font-size: 11.500px;
  letter-spacing: -0.1px;
}

.combo.size {
  width: 44px;
}

.sep {
  width: 1px;
  height: 24px;
  background: #d4d4d4;
}

.aa {
  font-size: 13px;
}

.g-b {
  font-weight: 700;
  font-size: 12.500px;
}

.g-i {
  font-family: "Liberation Serif", serif;
  font-size: 15px;
}

.g-u,
.g-s {
  font-size: 12.500px;
}

.g-x {
  font-weight: 600;
  font-size: 12px;
  line-height: 16px;
}

.g-x sub,
.g-x sup {
  font-size: 7px;
  color: #2b88c8;
  line-height: 0;
}

.g-x sup {
  vertical-align: 6px;
}

.g-x sub {
  vertical-align: -3px;
}

.paragraph {
  width: 192px;
}

.paragraph .body {
  padding: 4px 0 0 12px;
}

.paragraph .row {
  height: 24px;
  margin-bottom: 2px;
}

.para-row1 {
  grid-template-columns: 24px 17px 23px 18px 21px 16px 7px 26px 16px;
}

.para-row2 {
  margin-left: -4px;
  grid-template-columns: 31px 26px 26px 21px 6px 22px 10px;
}

.para-row3 {
  grid-template-columns: 24px 17px 23px 13px 6px 23px 9px 20px;
}

.pressed {
  width: 24px;
  height: 24px;
  border: 1px solid #888;
  border-radius: 3px;
  background: #eaeaea;
  display: flex;
  align-items: center;
  justify-content: center;
}

.styles {
  width: 370px;
}

.styles .body {
  padding: 11px 0 0 9px;
}

.gallery {
  width: 350px;
  height: 61px;
  border: 1px solid #ccc;
  border-radius: 4px;
  display: grid;
  grid-template-columns: 108px 107px 110px 23px;
  align-items: center;
  font-family: "Liberation Sans", Arial, sans-serif;
  font-size: 14.670px;
  color: #111;
}

.style {
  text-align: center;
  padding-bottom: 3px;
}

.style.selected {
  height: 57px;
  line-height: 55px;
  border: 1px solid #777;
  box-shadow: inset 0 0 0 3px #e6e6e6;
  padding-bottom: 0;
}

.style.heading {
  font-size: 26.670px;
  text-align: left;
  padding-left: 6px;
  line-height: 30px;
}

.more {
  height: 61px;
  width: 24px;
  border: 1px solid #777;
  border-left-color: #aaa;
  border-radius: 0 5px 5px 0;
  display: flex;
  align-items: center;
  justify-content: center;
  padding-bottom: 3px;
}

.editing {
  width: 54px;
  padding-top: 6px;
}

.editing .big {
  padding-right: 2px;
}

.voice {
  width: 58px;
  padding-top: 7px;
}

.voice .big {
  color: #999;
  padding-top: 1px;
}

.editor {
  width: 58px;
  padding-top: 8px;
}

.addins {
  width: 63px;
  padding-top: 8px;
}

.addins .big,
.addins .label {
  padding-right: 2px;
}

.addins .big span {
  margin-top: 4px;
}

.collapse {
  margin-left: auto;
  padding: 83px 10px 0 0;
}

.notice {
  height: 30px;
  margin: 0 8px;
  padding-left: 12px;
  background: #fdfbd3;
  border-radius: 0 0 8px 8px;
  box-shadow: 0 1px 2px rgba(0, 0, 0, 0.25);
  display: grid;
  grid-template-columns: 24px 127px 790px 127px 164px 12px;
  align-items: center;
  position: relative;
}

.n-title {
  font-size: 11.500px;
  font-weight: 600;
}

.n-text {
  font-size: 11.500px;
  letter-spacing: -0.08px;
}

.n-btn {
  height: 26px;
  width: 118px;
  border: 1px solid #999;
  border-radius: 4px;
  background: #fff;
  display: flex;
  align-items: center;
  justify-content: center;
  font-size: 11.500px;
  letter-spacing: -0.05px;
}

.n-learn {
  width: 79px;
}

.workspace {
  height: 443px;
  display: flex;
  background: #e1e4e8;
  padding-left: 235px;
}

.page {
  width: 793px;
  background: #fff;
  border-right: 1px solid #d0d3d6;
  padding-left: 96px;
  position: relative;
}

.remnant {
  margin-left: 4px;
}

.handle {
  width: 15px;
  height: 15px;
  margin: 152px 0 0 -16px;
  border: 1px solid #aaa;
}

table {
  border-collapse: collapse;
  table-layout: fixed;
  width: 603px;
  font-family: "Liberation Serif", "Times New Roman", serif;
  font-size: 14.670px;
  line-height: 16.900px;
  color: #111;
}

th,
td {
  border: 1px solid #000;
  text-align: left;
  vertical-align: top;
  padding: 7px 0 7px 6px;
  white-space: nowrap;
}

td {
  padding: 6.500px 0 6.500px 6px;
}

.cursor {
  position: absolute;
  left: 407px;
  top: 227px;
}

.scrollbar {
  margin-left: auto;
  width: 17px;
  background: #f0f0f0;
  display: flex;
  flex-direction: column;
  align-items: center;
  padding: 5px 0;
}

.thumb {
  width: 7px;
  height: 31px;
  margin: 131px 0 auto;
  border-radius: 4px;
  background: #666;
}

.status {
  height: 21px;
  background: #f3f3f3;
  padding-left: 11px;
  display: grid;
  grid-template-columns: 71px 72px 36px 33px 110px 18px 577px 17px 50px 28px 52px 33px 13px 104px 21px 28px;
  align-items: center;
  font-size: 10.300px;
  letter-spacing: -0.1px;
  color: #444;
}

.s-pred {
  letter-spacing: -0.2px;
}

.s-acc {
  font-weight: 700;
  color: #222;
  letter-spacing: -0.02px;
}

.view-on {
  width: 39px;
  height: 21px;
  background: #e0e0e0;
  display: flex;
  align-items: center;
  justify-content: center;
}

.slider {
  width: 99px;
  height: 12px;
  background: linear-gradient(#555, #555) 48px 0 / 5px 12px no-repeat, linear-gradient(#333, #333) 0 50% / 99px 1px no-repeat;
}

.taskbar {
  height: 48px;
  background: #1f2229;
  border-top: 1px solid #111;
  padding-left: 20px;
  display: grid;
  grid-template-columns: 30px 209px 39px 231px 43px 44px 44px 44px 44px 44px 37px 52px 44px 102px 30px 34px 30px 24px 24px 21px 71px;
  align-items: center;
  color: #fff;
}

.weather,
.clock {
  display: flex;
  flex-direction: column;
  line-height: 16px;
  font-size: 11.500px;
}

.w-text {
  color: #d0d0d4;
}

.clock {
  align-items: flex-end;
}

.task-search {
  width: 218px;
  height: 30px;
  border-radius: 15px;
  background: #f3f3f3;
  border: 1px solid #fff;
  display: flex;
  align-items: center;
  padding: 0 2px 0 10px;
  color: #666;
  font-size: 13.200px;
}

.task-search span {
  margin: 0 auto 0 9px;
}

.hp,
.help {
  width: 25px;
  height: 25px;
  border-radius: 50%;
  border: 1px solid #fff;
  background: #0b50c0;
  text-align: center;
  font: italic 600 17px/19px "Open Sans", sans-serif;
  letter-spacing: -1px;
}

.help {
  background: #159cc6;
  font: bold 21px/23px "Open Sans", sans-serif;
  position: relative;
}

.help::after {
  content: "";
  position: absolute;
  right: -6px;
  top: -6px;
  width: 16px;
  height: 16px;
  border-radius: 50%;
  background: #fcb913;
}

/* highlighted tile of the running app */
.running {
  width: 40px;
  height: 40px;
  border-radius: 4px;
  background: #2d3037;
  border: 1px solid #363940;
  display: flex;
  align-items: center;
  justify-content: center;
  position: relative;
}

.running::after {
  content: "";
  position: absolute;
  left: 11px;
  bottom: 0;
  width: 16px;
  height: 3px;
  border-radius: 2px;
  background: #60c0ec;
}

.app {
  position: relative;
  width: 24px;
}

.app::before {
  content: "";
  position: absolute;
  left: 9px;
  top: 28px;
  width: 6px;
  height: 3px;
  border-radius: 2px;
  background: #8d9096;
}

.app::after {
  content: "";
  position: absolute;
  right: -3px;
  top: -3px;
  width: 12px;
  height: 12px;
  border-radius: 50%;
  background: #ed0c0c;
}

.chrome::after {
  content: "K";
  right: -5px;
  top: -4px;
  width: 16px;
  height: 16px;
  background: #45626c;
  color: #d5dde0;
  font-size: 9px;
  line-height: 16px;
  text-align: center;
}
```
